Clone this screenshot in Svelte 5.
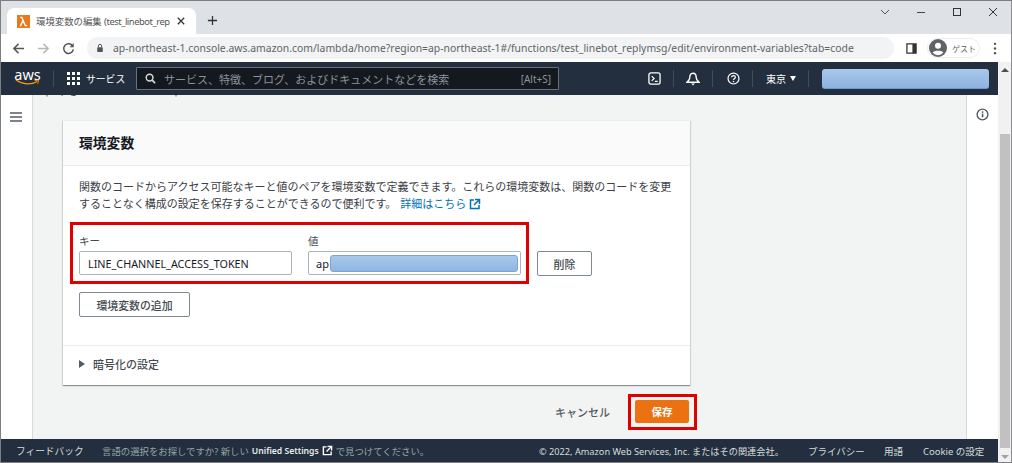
<script lang="ts">
    const desc1 = '関数のコードからアクセス可能なキーと値のペアを環境変数で定義できます。これらの環境変数は、関数のコードを変更';
    const desc2 = 'することなく構成の設定を保存することができるので便利です。';
    const url = 'ap-northeast-1.console.aws.amazon.com/lambda/home?region=ap-northeast-1#/functions/test_linebot_replymsg/edit/environment-variables?tab=code';
</script>

<div class="window">
    <div class="tabstrip">
        <div class="tab">
            <svg class="favicon" viewBox="0 0 14 14" width="13" height="13">
                <rect width="14" height="14" fill="#e8791f" />
                <path d="M3.5 12 6.6 6 5.2 2.6H3.6M5.9 4.6 8.9 11.4H11" fill="none" stroke="#fff" stroke-width="1.5" />
            </svg>
            <span class="tab-title">環境変数の編集 <span class="tab-latin">(test_linebot_rep</span></span>
            <svg class="tab-close" viewBox="0 0 10 10" width="8" height="8">
                <path d="M1 1 9 9M9 1 1 9" stroke="#333" stroke-width="1.6" />
            </svg>
        </div>
        <svg class="newtab" viewBox="0 0 12 12" width="11" height="11">
            <path d="M6 1V11M1 6H11" stroke="#333" stroke-width="1.4" />
        </svg>
        <div class="winctl">
            <svg viewBox="0 0 12 12" width="12" height="12"><path d="M2 4 6 8 10 4" fill="none" stroke="#555" /></svg>
            <svg viewBox="0 0 12 12" width="12" height="12"><path d="M2 6.5H10" stroke="#444" /></svg>
            <svg viewBox="0 0 12 12" width="12" height="12"><rect x="2.5" y="2.5" width="7" height="7" fill="none" stroke="#333" /></svg>
            <svg viewBox="0 0 12 12" width="12" height="12"><path d="M2 2 10 10M10 2 2 10" stroke="#333" /></svg>
        </div>
    </div>

    <div class="toolbar">
        <svg class="navicon" viewBox="0 0 14 14" width="13" height="13"><path d="M13 7H2M7 2 2 7 7 12" fill="none" stroke="#555" stroke-width="1.6" /></svg>
        <svg class="navicon" viewBox="0 0 14 14" width="13" height="13"><path d="M1 7H12M7 2 12 7 7 12" fill="none" stroke="#b5b7ba" stroke-width="1.6" /></svg>
        <svg class="navicon" viewBox="0 0 14 14" width="13" height="13"><path d="M11.6 4.6A5.2 5.2 0 1 0 12.2 8" fill="none" stroke="#555" stroke-width="1.6" /><path d="M12.6 1.2V5.6H8.2Z" fill="#555" /></svg>
        <div class="omnibox">
            <svg viewBox="0 0 10 12" width="8" height="10"><path d="M3 5V3.4a2 2 0 0 1 4 0V5" fill="none" stroke="#555" stroke-width="1.2" /><rect x="1.5" y="5" width="7" height="6" rx="1" fill="#555" /></svg>
            <span>{url}</span>
        </div>
        <svg class="panel-ic" viewBox="0 0 12 12" width="11" height="11"><path d="M1 1H11V11H1Z" fill="none" stroke="#333" stroke-width="1.4" /><rect x="7" y="1" width="4" height="10" fill="#333" /></svg>
        <div class="guest">
            <svg viewBox="0 0 18 18" width="18" height="18">
                <circle cx="9" cy="9" r="9" fill="#5f6368" />
                <circle cx="9" cy="6.8" r="3" fill="#fff" />
                <path d="M3.6 13.6C5 11.2 13 11.2 14.4 13.6A7 7 0 0 1 3.6 13.6Z" fill="#fff" />
            </svg>
            <span>ゲスト</span>
        </div>
        <svg class="kebab" viewBox="0 0 4 14" width="4" height="13"><circle cx="2" cy="2" r="1.3" fill="#555" /><circle cx="2" cy="7" r="1.3" fill="#555" /><circle cx="2" cy="12" r="1.3" fill="#555" /></svg>
    </div>

    <div class="viewport">
        <div class="page">
            <nav class="topnav">
                <div class="aws">
                    <span>aws</span>
                    <svg viewBox="0 0 26 7" width="25" height="7"><path d="M1 1C8 6 17 6 23 2.4" fill="none" stroke="#f90" stroke-width="1.3" /><path d="M20.5 1.4 24.6 1 23.6 4.8" fill="none" stroke="#f90" stroke-width="1" /></svg>
                </div>
                <div class="nav-sep"></div>
                <svg class="grid-ic" viewBox="0 0 13 13" width="13" height="13">
                    {#each [0, 5, 10] as y}
                        {#each [0, 5, 10] as x}
                            <rect x={x} y={y} width="3" height="3" fill="#fff" />
                        {/each}
                    {/each}
                </svg>
                <span class="services">サービス</span>
                <div class="search">
                    <svg viewBox="0 0 12 12" width="11" height="11"><circle cx="5" cy="5" r="3.7" fill="none" stroke="#d5dbdb" stroke-width="1.6" /><path d="M7.8 7.8 11 11" stroke="#d5dbdb" stroke-width="1.8" /></svg>
                    <span class="ph">サービス、特徴、ブログ、およびドキュメントなどを検索</span>
                    <span class="alt">[Alt+S]</span>
                </div>
                <svg class="cloudshell" viewBox="0 0 14 14" width="13" height="13"><rect x="1" y="1" width="12" height="12" rx="2" fill="none" stroke="#fff" stroke-width="1.4" /><path d="M4 4.4 6.6 7 4 9.6M7.4 10H10.4" fill="none" stroke="#fff" stroke-width="1.3" /></svg>
                <div class="nav-sep s1"></div>
                <svg class="bell" viewBox="0 0 14 14" width="14" height="14"><path d="M7 1.2C4.4 1.2 3.8 3.4 3.8 5.4 3.8 7.6 2 9 1 10.2H13C12 9 10.2 7.6 10.2 5.4 10.2 3.4 9.6 1.2 7 1.2Z" fill="none" stroke="#fff" stroke-width="1.4" /><path d="M5.2 11.4H8.8L7 13.4Z" fill="#fff" /></svg>
                <div class="nav-sep s2"></div>
                <svg class="help" viewBox="0 0 14 14" width="13" height="13"><circle cx="7" cy="7" r="5.9" fill="none" stroke="#fff" stroke-width="1.3" /><path d="M5 5.6C5 3.4 9 3.4 9 5.6 9 7 7 6.8 7 8.6" fill="none" stroke="#fff" stroke-width="1.3" /><rect x="6.3" y="9.6" width="1.4" height="1.4" fill="#fff" /></svg>
                <div class="nav-sep s3"></div>
                <span class="region">東京 <i class="caret"></i></span>
                <div class="nav-sep s4"></div>
                <div class="account"></div>
            </nav>

            <div class="middle">
                <aside class="side-left">
                    <svg viewBox="0 0 12 10" width="12" height="10"><path d="M0 1H12M0 5H12M0 9H12" stroke="#545b64" stroke-width="1.4" /></svg>
                </aside>

                <main class="content">
                    <svg class="clipped" viewBox="0 0 190 3" width="190" height="3">
                        <path d="M14 0V1.5M29 0V1M38 0H42V1M143 0V1.5" stroke="#545b64" />
                    </svg>
                    <section class="card">
                        <header class="card-head">環境変数</header>
                        <div class="card-body">
                            <p class="desc">
                                {desc1}<br />
                                {desc2} <a href="#docs" class="more">詳細はこちら
                                    <svg viewBox="0 0 12 12" width="12" height="12"><path d="M5 2H1.5V10.5H10V7" fill="none" stroke="#0073bb" stroke-width="1.5" /><path d="M6 1.5H10.5V6M10.3 1.7 5 7" fill="none" stroke="#0073bb" stroke-width="1.5" /></svg>
                                </a>
                            </p>
                            <div class="env-row">
                                <label class="field key">
                                    <span>キー</span>
                                    <input value="LINE_CHANNEL_ACCESS_TOKEN" readonly />
                                </label>
                                <div class="field val">
                                    <span>値</span>
                                    <div class="val-box">ap<div class="masked"></div></div>
                                </div>
                                <button class="btn del">削除</button>
                                <div class="mark mark-row"></div>
                            </div>
                            <button class="btn add">環境変数の追加</button>
                        </div>
                        <div class="card-foot"><i class="tri"></i>暗号化の設定</div>
                    </section>
                    <div class="actions">
                        <span class="cancel">キャンセル</span>
                        <div class="save-wrap">
                            <button class="save">保存</button>
                            <div class="mark mark-save"></div>
                        </div>
                    </div>
                </main>

                <aside class="side-right">
                    <svg viewBox="0 0 14 14" width="13" height="13"><circle cx="7" cy="7" r="5.8" fill="none" stroke="#545b64" stroke-width="1.5" /><rect x="6.2" y="6" width="1.7" height="4" fill="#545b64" /><rect x="6.2" y="3.6" width="1.7" height="1.6" fill="#545b64" /></svg>
                </aside>
            </div>

            <footer class="foot">
                <span class="fb">フィードバック</span>
                <span class="lang">言語の選択をお探しですか? 新しい <b>Unified Settings</b>
                    <svg viewBox="0 0 12 12" width="11" height="11"><path d="M5 2H1.5V10.5H10V7" fill="none" stroke="#fff" stroke-width="1.5" /><path d="M6 1.5H10.5V6M10.3 1.7 5 7" fill="none" stroke="#fff" stroke-width="1.5" /></svg>
                    で見つけてください。</span>
                <span class="copy">© 2022, Amazon Web Services, Inc. またはその関連会社。</span>
                <span class="fl l1">プライバシー</span>
                <span class="fl l2">用語</span>
                <span class="fl l3">Cookie の設定</span>
            </footer>
        </div>

        <div class="scrollbar">
            <i class="sb-up"></i>
            <div class="sb-thumb"></div>
            <i class="sb-down"></i>
        </div>
    </div>
</div>

<style>
    :global(body) {
        margin: 0;
        background: #fff;
    }

    .window {
        width: 1012px;
        height: 463px;
        box-sizing: border-box;
        border: 1px solid #7d7f82;
        border-right-color: #8a8c8f;
        display: flex;
        flex-direction: column;
        overflow: hidden;
        font-family: "Noto Sans", "Noto Sans CJK JP", sans-serif;
    }

    .tabstrip {
        height: 33px;
        flex: none;
        background: #dee1e6;
        display: flex;
        align-items: flex-end;
        padding-left: 6px;
    }

    .tab {
        width: 189px;
        height: 26px;
        background: #fff;
        border-radius: 7px 7px 0 0;
        display: flex;
        align-items: center;
        padding-left: 10px;
        box-sizing: border-box;
    }

    .favicon {
        flex: none;
    }

    .tab-title {
        margin-left: 6px;
        width: 134px;
        font-size: 9.4px;
        color: #555;
        white-space: nowrap;
    }

    .tab-latin {
        letter-spacing: -0.45px;
    }

    .tab-close {
        margin-left: 7px;
    }

    .newtab {
        margin: 0 0 8px 11px;
    }

    .winctl {
        margin-left: auto;
        align-self: flex-start;
        display: flex;
        gap: 24px;
        padding: 5px 12px 0 0;
    }

    .toolbar {
        height: 28px;
        flex: none;
        background: #fff;
        display: flex;
        align-items: center;
        padding-left: 11px;
    }

    .navicon {
        margin-right: 12px;
        flex: none;
    }

    .omnibox {
        width: 807px;
        height: 22px;
        box-sizing: border-box;
        border-radius: 11px;
        background: #f1f3f4;
        display: flex;
        align-items: center;
        gap: 9px;
        padding-left: 9px;
        font-size: 10.4px;
        color: #5f6368;
        white-space: nowrap;
        flex: none;
    }

    .omnibox svg {
        flex: none;
    }

    .panel-ic {
        margin-left: 12px;
        flex: none;
    }

    .guest {
        margin-left: 10px;
        width: 53px;
        height: 20px;
        border: 1px solid #eceef0;
        border-radius: 11px;
        display: flex;
        align-items: center;
        gap: 5px;
        font-size: 8px;
        color: #5f6368;
        padding-left: 1px;
        box-sizing: border-box;
        flex: none;
        white-space: nowrap;
    }

    .kebab {
        margin-left: 13px;
        flex: none;
    }

    .viewport {
        flex: 1;
        min-height: 0;
        display: flex;
    }

    .page {
        width: 997px;
        display: flex;
        flex-direction: column;
    }

    .scrollbar {
        flex: 1;
        background: #f1f1f1;
        display: flex;
        flex-direction: column;
        align-items: center;
        padding: 6px 0 3px;
    }

    .sb-thumb {
        width: 10px;
        height: 314px;
        margin-top: 62px;
        background: #c1c1c1;
        margin-bottom: auto;
    }

    .sb-up {
        width: 0;
        height: 0;
        border: 4px solid transparent;
        border-top: 0;
        border-bottom: 4px solid #505050;
    }

    .sb-down {
        width: 0;
        height: 0;
        border: 4px solid transparent;
        border-bottom: 0;
        border-top: 4px solid #a3a3a3;
    }

    .topnav {
        height: 33px;
        flex: none;
        box-sizing: border-box;
        background: #232f3e;
        display: flex;
        align-items: center;
        padding-left: 14px;
        color: #fff;
    }

    .aws {
        width: 25px;
        display: flex;
        flex-direction: column;
        align-items: center;
        font-size: 14.5px;
        line-height: 12px;
        margin-top: -3px;
    }

    .aws svg {
        margin-top: -1px;
    }

    .nav-sep {
        width: 1px;
        height: 17px;
        background: #414d5c;
        margin-left: 13px;
        flex: none;
    }

    .grid-ic {
        margin-left: 13px;
        flex: none;
    }

    .services {
        font-size: 9.8px;
        margin-left: 6px;
        width: 37px;
        white-space: nowrap;
    }

    .search {
        margin-left: 13px;
        width: 423px;
        height: 23px;
        box-sizing: border-box;
        background: #14181f;
        border: 1px solid #687078;
        border-radius: 1px;
        display: flex;
        align-items: center;
        padding: 0 7px 0 8px;
        font-size: 11px;
        color: #8d9399;
        flex: none;
    }

    .search svg {
        flex: none;
    }

    .ph {
        margin-left: 8px;
        white-space: nowrap;
    }

    .alt {
        margin-left: auto;
        font-size: 10px;
    }

    .cloudshell {
        margin-left: 89px;
        flex: none;
    }

    .s1 {
        margin-left: 12px;
    }

    .bell {
        margin-left: 12px;
        flex: none;
    }

    .s2 {
        margin-left: 12px;
    }

    .help {
        margin-left: 14px;
        flex: none;
    }

    .s3 {
        margin-left: 12px;
    }

    .region {
        margin-left: 13px;
        font-size: 10px;
        display: flex;
        align-items: center;
        gap: 4px;
        white-space: nowrap;
    }

    .caret {
        width: 0;
        height: 0;
        border: 3.5px solid transparent;
        border-bottom: 0;
        border-top: 5px solid #fff;
    }

    .s4 {
        margin-left: 12px;
    }

    .account {
        margin-left: 13px;
        width: 167px;
        height: 20px;
        box-sizing: border-box;
        flex: none;
        border-radius: 3px;
        background: linear-gradient(#a9c8ec, #8db3e0);
        border-bottom: 1px solid #6f9ac9;
    }

    .middle {
        flex: 1;
        min-height: 0;
        display: flex;
        background: #f2f3f3;
    }

    .side-left {
        width: 32px;
        flex: none;
        background: #fff;
        border-right: 1px solid #d5dbdb;
        padding: 10px 0 0 9px;
        box-sizing: border-box;
    }

    .side-right {
        width: 32px;
        flex: none;
        background: #fff;
        border-left: 1px solid #d5dbdb;
        box-sizing: border-box;
        padding: 9px 0 0 9px;
    }

    .content {
        flex: 1;
        min-width: 0;
        padding-left: 30px;
        overflow: hidden;
    }

    .clipped {
        display: block;
        margin: 0 0 22px -30px;
    }

    .card {
        width: 627px;
        height: 265px;
        background: #fff;
        border-top: 1px solid #eaeded;
        box-shadow: 0 1px 1px rgba(0, 28, 36, 0.3), 1px 1px 1px rgba(0, 28, 36, 0.1), -1px 1px 1px rgba(0, 28, 36, 0.1);
        display: flex;
        flex-direction: column;
        box-sizing: border-box;
    }

    .card-head {
        height: 45px;
        flex: none;
        box-sizing: border-box;
        background: #fafafa;
        border-bottom: 1px solid #eaeded;
        padding: 0 0 2px 16px;
        display: flex;
        align-items: center;
        font-size: 13.8px;
        font-weight: 700;
        color: #16191f;
    }

    .card-body {
        flex: 1;
        padding: 12px 16px 0;
    }

    .desc {
        margin: 0;
        font-size: 11px;
        line-height: 17px;
        color: #3b4046;
        white-space: nowrap;
    }

    .more {
        color: #0073bb;
        text-decoration: none;
        margin-left: 1px;
    }

    .more svg {
        vertical-align: -2px;
    }

    .env-row {
        position: relative;
        display: flex;
        align-items: flex-end;
        margin-top: 19px;
    }

    .field {
        display: flex;
        flex-direction: column;
        font-size: 10.5px;
        color: #444b53;
    }

    .field span {
        height: 20px;
        line-height: 21px;
    }

    .key input {
        width: 213px;
        height: 24px;
        box-sizing: border-box;
        border: 1px solid #aab7b8;
        border-radius: 2px;
        padding: 0 0 0 8px;
        font: 10.8px "Noto Sans", sans-serif;
        color: #16191f;
        outline: none;
    }

    .val {
        margin-left: 16px;
    }

    .val-box {
        width: 213px;
        height: 24px;
        box-sizing: border-box;
        border: 1px solid #aab7b8;
        border-radius: 2px;
        display: flex;
        align-items: center;
        padding: 0 2px 0 7px;
        font-size: 11px;
        color: #16191f;
    }

    .masked {
        flex: 1;
        height: 17px;
        margin-left: 1px;
        border-radius: 3px;
        border: 1px solid #7ea3cc;
        box-sizing: border-box;
        background: linear-gradient(#a9c8ec, #8fb6e2);
    }

    .btn {
        background: #fff;
        border: 1px solid #7d8998;
        border-radius: 2px;
        font: 500 10.9px "Noto Sans CJK JP", sans-serif;
        color: #444b53;
        height: 25px;
        padding: 0;
    }

    .del {
        width: 55px;
        margin-left: 16px;
        margin-bottom: -1px;
    }

    .add {
        display: block;
        width: 111px;
        margin-top: 17px;
    }

    .mark {
        position: absolute;
        border: 3px solid #e00000;
        box-sizing: border-box;
        pointer-events: none;
    }

    .mark-row {
        left: -9px;
        top: -9px;
        width: 459px;
        height: 62px;
    }

    .card-foot {
        height: 40px;
        flex: none;
        border-top: 1px solid #eaeded;
        box-sizing: border-box;
        padding: 0 0 3px 16px;
        display: flex;
        align-items: center;
        gap: 8px;
        font-size: 11px;
        font-weight: 500;
        color: #444b53;
    }

    .tri {
        width: 0;
        height: 0;
        border: 4px solid transparent;
        border-right: 0;
        border-left: 6px solid #545b64;
    }

    .actions {
        width: 626px;
        display: flex;
        justify-content: flex-end;
        align-items: center;
        margin-top: 15px;
    }

    .cancel {
        font-size: 11px;
        font-weight: 500;
        color: #545b64;
        margin-right: 25px;
    }

    .save-wrap {
        position: relative;
    }

    .save {
        display: block;
        width: 54px;
        height: 23px;
        border: 0;
        border-radius: 2px;
        background: #ec7211;
        color: #fff;
        font: 700 10.5px "Noto Sans CJK JP", sans-serif;
        padding: 0;
    }

    .mark-save {
        left: -7px;
        top: -6px;
        width: 69px;
        height: 36px;
    }

    .foot {
        height: 23px;
        flex: none;
        background: #232f3e;
        display: flex;
        align-items: center;
        padding-left: 15px;
        font-size: 9.5px;
        color: #d5dbdb;
        white-space: nowrap;
    }

    .fb {
        width: 86px;
        flex: none;
        font-size: 9.7px;
    }

    .lang {
        color: #95a5a6;
        display: flex;
        align-items: center;
        gap: 3px;
        width: 437px;
        flex: none;
        font-size: 9.4px;
    }

    .lang b {
        color: #eaeded;
        font-weight: 600;
        font-size: 8.6px;
    }

    .copy {
        width: 269px;
        flex: none;
        font-size: 9.2px;
    }

    .l1 {
        width: 76px;
        flex: none;
    }

    .l2 {
        width: 39px;
        flex: none;
    }
</style>
